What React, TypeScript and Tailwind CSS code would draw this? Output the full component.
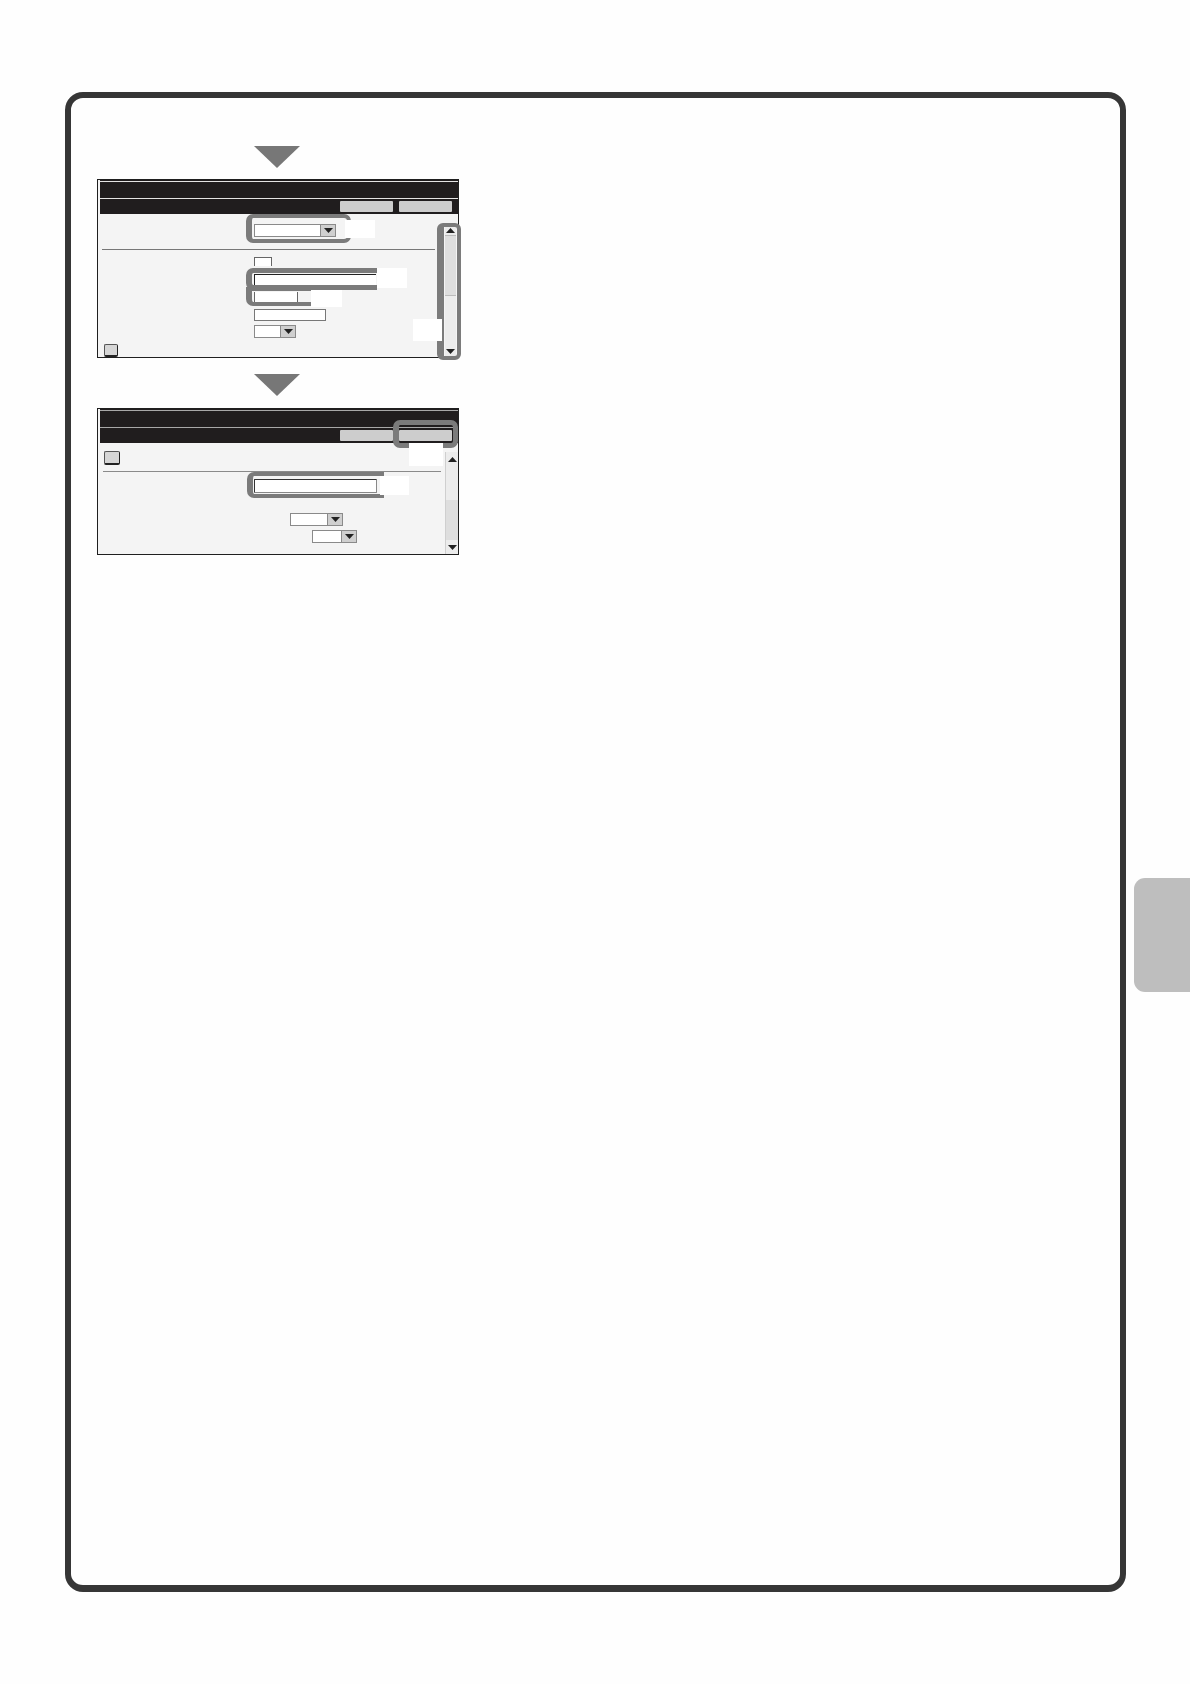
function Arrow() {
  return (
    <svg width="46" height="22" viewBox="0 0 46 22" className="ml-[157px] block">
      <polygon points="0,0 46,0 23,22" fill="#777777" />
    </svg>
  );
}

function Caret({ up = false }: { up?: boolean }) {
  return (
    <svg width="9" height="5" viewBox="0 0 9 5" className="block">
      <polygon points={up ? "4.5,0 9,5 0,5" : "0,0 9,0 4.5,5"} fill="#222222" />
    </svg>
  );
}

function Select({ width, className = "" }: { width: string; className?: string }) {
  return (
    <div className={`flex h-[13px] border border-[#8a8a8a] bg-white ${width} ${className}`}>
      <div className="flex-1" />
      <div className="flex w-[15px] items-center justify-center border-l border-[#8a8a8a] bg-[#cfcfcf]">
        <Caret />
      </div>
    </div>
  );
}

function Header({ line }: { line: string }) {
  return (
    <div className="ml-[2px] bg-[#201d1e] pt-[1px]">
      <div className={`h-[17px] border-t ${line}`} />
      <div className={`flex h-[16px] items-center justify-end gap-[6px] border-t pr-[6px] ${line}`}>
        <div className="h-[11px] w-[53px] rounded-[1px] bg-[#cdcdcd]" />
        <div className="h-[11px] w-[53px] rounded-[1px] bg-[#cdcdcd]" />
      </div>
    </div>
  );
}

function KeyButton({ className = "" }: { className?: string }) {
  return (
    <div
      className={`rounded-[2px] border border-[#555555] border-r-[#222222] border-b-2 border-b-[#222222] bg-[#d6d6d6] ${className}`}
    />
  );
}

function Ring({ className }: { className: string }) {
  return <div className={`absolute border-[#7b7b7b] ${className}`} />;
}

function Patch({ className }: { className: string }) {
  return <div className={`absolute bg-white ${className}`} />;
}

function FirstScreen() {
  return (
    <div className="relative h-[179px] w-[362px] border border-[#1f1f1f] bg-[#f4f4f4]">
      <Header line="border-[#e4e4e4]" />
      <div className="flex">
        <div className="w-[347px]">
          <Select width="w-[82px]" className="ml-[156px] mt-[10px]" />
          <div className="ml-[4px] mt-[12px] h-[1px] w-[333px] bg-[#777777]" />
          <div className="ml-[156px] mt-[7px] h-[9px] w-[18px] border border-b-0 border-[#666666] bg-white" />
          <div className="ml-[156px] mt-[8px] h-[13px] w-[122px] border-l border-t border-[#222222] bg-white" />
          <div className="ml-[156px] mt-[5px] h-[12px] w-[44px] border-x border-[#666666] bg-white" />
          <div className="ml-[156px] mt-[5px] h-[12px] w-[72px] border border-[#777777] bg-white" />
          <Select width="w-[42px]" className="ml-[156px] mt-[4px]" />
          <KeyButton className="ml-[6px] mt-[6px] h-[13px] w-[14px]" />
        </div>
        <div className="mt-[11px] flex h-[132px] w-[11px] flex-col bg-[#ececec]">
          <div className="flex h-[11px] items-center justify-center border-b border-[#bbbbbb]">
            <Caret up />
          </div>
          <div className="h-[60px] border-b border-[#bbbbbb] bg-[#dedede]" />
          <div className="flex flex-1 items-end justify-center pb-[3px]">
            <Caret />
          </div>
        </div>
      </div>
      <Ring className="left-[148px] top-[34px] h-[29px] w-[105px] rounded-[7px] border-[4px] border-l-[6px]" />
      <Patch className="left-[247px] top-[40px] h-[18px] w-[30px]" />
      <Ring className="left-[148px] top-[88px] h-[22px] w-[131px] rounded-l-[7px] border-[5px] border-l-[6px] border-r-0" />
      <Ring className="left-[148px] top-[107px] h-[19px] w-[65px] rounded-bl-[7px] border-[4px] border-l-[6px] border-r-0" />
      <Patch className="left-[279px] top-[88px] h-[20px] w-[30px]" />
      <Patch className="left-[213px] top-[110px] h-[17px] w-[31px]" />
      <Ring className="left-[339px] top-[43px] h-[137px] w-[24px] rounded-[6px] border-[4px] border-l-[7px]" />
      <Patch className="left-[315px] top-[139px] h-[22px] w-[29px]" />
    </div>
  );
}

function SecondScreen() {
  return (
    <div className="relative h-[147px] w-[362px] border border-[#1f1f1f] bg-[#f4f4f4]">
      <Header line="border-[#a8a8a8]" />
      <div className="flex">
        <div className="w-[347px]">
          <KeyButton className="ml-[6px] mt-[8px] h-[14px] w-[16px]" />
          <div className="ml-[5px] mt-[6px] h-[1px] w-[338px] bg-[#8a8a8a]" />
          <div className="ml-[156px] mt-[7px] h-[14px] w-[123px] rounded-[1px] border border-[#333333] border-r-[#888888] border-b-[#888888] bg-white" />
          <Select width="w-[53px]" className="ml-[192px] mt-[20px]" />
          <Select width="w-[45px]" className="ml-[214px] mt-[4px]" />
        </div>
        <div className="mt-[9px] flex h-[102px] w-[13px] flex-col border-l border-[#cfcfcf] bg-[#ececec]">
          <div className="flex h-[14px] items-center justify-center">
            <Caret up />
          </div>
          <div className="mt-[34px] h-[40px] bg-[#dedede]" />
          <div className="flex flex-1 items-end justify-center pb-[4px]">
            <Caret />
          </div>
        </div>
      </div>
      <Ring className="left-[295px] top-[11px] h-[28px] w-[65px] rounded-[7px] border-[5px] border-l-[6px]" />
      <Patch className="left-[311px] top-[34px] h-[23px] w-[34px]" />
      <Ring className="left-[149px] top-[63px] h-[26px] w-[137px] rounded-l-[7px] border-[4px] border-l-[6px] border-r-0" />
      <Patch className="left-[282px] top-[67px] h-[19px] w-[29px]" />
    </div>
  );
}

export default function App() {
  return (
    <div className="flex h-[1684px] w-[1190px] items-start bg-[#fefefe] pl-[65px] pt-[92px]">
      <div className="h-[1500px] w-[1061px] rounded-[18px] border-[6px] border-b-[7px] border-[#363636] pl-[26px] pt-[48px]">
        <div className="flex w-[362px] flex-col">
          <Arrow />
          <div className="mt-[11px]">
            <FirstScreen />
          </div>
          <div className="mt-[16px]">
            <Arrow />
          </div>
          <div className="mt-[12px]">
            <SecondScreen />
          </div>
        </div>
      </div>
      <div className="ml-[8px] mt-[786px] h-[114px] w-[56px] rounded-l-[11px] bg-[#bebebe]" />
    </div>
  );
}
